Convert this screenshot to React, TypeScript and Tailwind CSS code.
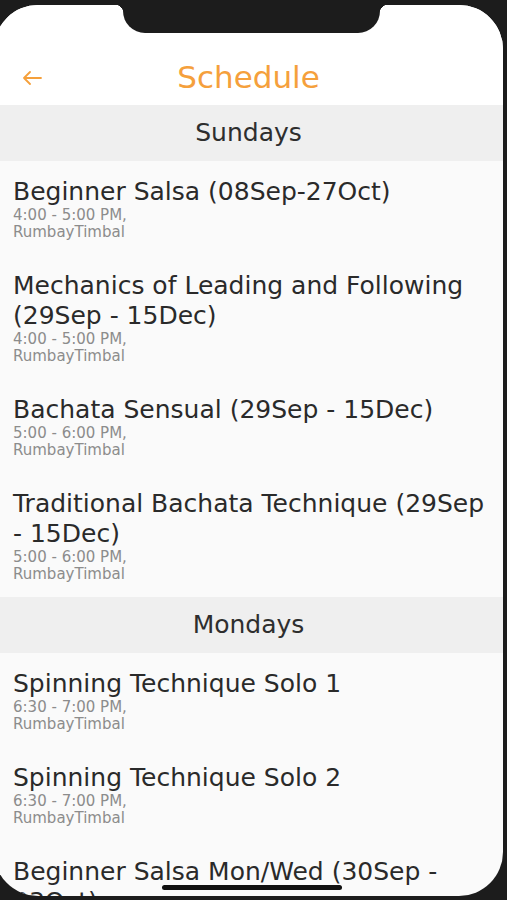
import React from 'react';

type Item = { title: string; time: string; place: string };
type Section = { day: string; items: Item[] };

const sections: Section[] = [
  {
    day: 'Sundays',
    items: [
      { title: 'Beginner Salsa (08Sep-27Oct)', time: '4:00 - 5:00 PM,', place: 'RumbayTimbal' },
      { title: 'Mechanics of Leading and Following (29Sep - 15Dec)', time: '4:00 - 5:00 PM,', place: 'RumbayTimbal' },
      { title: 'Bachata Sensual (29Sep - 15Dec)', time: '5:00 - 6:00 PM,', place: 'RumbayTimbal' },
      { title: 'Traditional Bachata Technique (29Sep - 15Dec)', time: '5:00 - 6:00 PM,', place: 'RumbayTimbal' },
    ],
  },
  {
    day: 'Mondays',
    items: [
      { title: 'Spinning Technique Solo 1', time: '6:30 - 7:00 PM,', place: 'RumbayTimbal' },
      { title: 'Spinning Technique Solo 2', time: '6:30 - 7:00 PM,', place: 'RumbayTimbal' },
      { title: 'Beginner Salsa Mon/Wed (30Sep - 03Oct)', time: '7:00 - 8:00 PM,', place: 'RumbayTimbal' },
    ],
  },
];

const font = { fontFamily: '"DejaVu Sans", "Liberation Sans", sans-serif' };

export default function App() {
  return (
    <div className="relative w-[507px] h-[900px] overflow-hidden bg-[#1c1c1c]" style={font}>
      {/* screen */}
      <div className="relative -ml-[6px] mt-[5px] w-[509px] h-[891px] rounded-[44px] overflow-hidden bg-[#fafafa]">
        {/* nav bar */}
        <div className="bg-white h-[100px] flex items-end pb-[8px] px-[28px]">
          <div className="relative w-full flex items-center justify-center h-[40px]">
            <svg className="absolute left-0 top-[14px]" width="20" height="14" viewBox="0 0 20 14" fill="none">
              <path d="M19 7H2M8 1L2 7l6 6" stroke="#f5a03c" strokeWidth="1.8" strokeLinecap="round" strokeLinejoin="round" />
            </svg>
            <span className="text-[31px] leading-[40px] text-[#f5a03c]">Schedule</span>
          </div>
        </div>

        {sections.map((s) => (
          <div key={s.day}>
            <div className="h-[56px] bg-[#efefef] flex items-center justify-center text-[25px] leading-[28px] text-[#2e2e2e]">
              {s.day}
            </div>
            {s.items.map((it) => (
              <div key={it.title} className="pl-[19px] pr-[12px] pt-[16px] pb-[14px]">
                <div className="text-[25px] leading-[30px] text-[#2a2a2a]">{it.title}</div>
                <div className="text-[15px] leading-[17px] text-[#8c8c8c]">{it.time}</div>
                <div className="text-[15px] leading-[17px] text-[#8c8c8c]">{it.place}</div>
              </div>
            ))}
          </div>
        ))}
      </div>

      {/* notch */}
      <div className="absolute left-[123px] top-0 w-[257px] h-[33px] rounded-b-[22px] bg-[#1c1c1c]" />
      <div
        className="absolute left-[115px] top-[5px] w-[8px] h-[8px]"
        style={{ background: 'radial-gradient(circle at 0 100%, transparent 8px, #1c1c1c 8.5px)' }}
      />
      <div
        className="absolute left-[380px] top-[5px] w-[8px] h-[8px]"
        style={{ background: 'radial-gradient(circle at 100% 100%, transparent 8px, #1c1c1c 8.5px)' }}
      />

      {/* home indicator */}
      <div className="absolute left-[162px] top-[885px] w-[180px] h-[5px] rounded-full bg-[#111]" />
    </div>
  );
}
